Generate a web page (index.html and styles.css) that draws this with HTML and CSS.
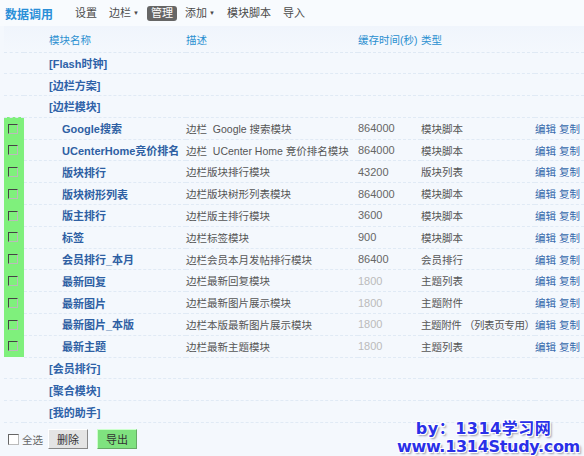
FILE: index.html
```html
<!DOCTYPE html>
<html>
<head>
<meta charset="utf-8">
<link rel="stylesheet" href="styles.css">
</head>
<body>
<div class="page">
  <div class="topbar">
    <span class="title">数据调用</span>
    <nav class="nav">
      <a class="nav-item">设置</a>
      <a class="nav-item">边栏<span class="arrow">▼</span></a>
      <a class="nav-item active">管理</a>
      <a class="nav-item">添加<span class="arrow">▼</span></a>
      <a class="nav-item">模块脚本</a>
      <a class="nav-item">导入</a>
    </nav>
  </div>
  <table class="grid">
    <colgroup>
      <col class="c-check"><col class="c-name"><col class="c-desc"><col class="c-cache"><col class="c-type"><col class="c-ops">
    </colgroup>
    <thead>
      <tr class="head">
        <th></th><th class="pad-g">模块名称</th><th>描述</th><th>缓存时间(秒)</th><th>类型</th><th></th>
      </tr>
    </thead>
    <tbody>
      <tr class="group"><td></td><td class="pad-g" colspan="5">[Flash时钟]</td></tr>
      <tr class="group"><td></td><td class="pad-g" colspan="5">[边栏方案]</td></tr>
      <tr class="group"><td></td><td class="pad-g" colspan="5">[边栏模块]</td></tr>
      <tr class="item"><td class="chk"><span class="box"></span></td><td class="name">Google搜索</td><td class="desc">边栏&nbsp; Google 搜索模块</td><td class="cache">864000</td><td class="type">模块脚本</td><td class="ops"><a>编辑</a> <a>复制</a></td></tr>
      <tr class="item"><td class="chk"><span class="box"></span></td><td class="name">UCenterHome竞价排名</td><td class="desc">边栏&nbsp; UCenter Home 竞价排名模块</td><td class="cache">864000</td><td class="type">模块脚本</td><td class="ops"><a>编辑</a> <a>复制</a></td></tr>
      <tr class="item"><td class="chk"><span class="box"></span></td><td class="name">版块排行</td><td class="desc">边栏版块排行模块</td><td class="cache">43200</td><td class="type">版块列表</td><td class="ops"><a>编辑</a> <a>复制</a></td></tr>
      <tr class="item"><td class="chk"><span class="box"></span></td><td class="name">版块树形列表</td><td class="desc">边栏版块树形列表模块</td><td class="cache">864000</td><td class="type">模块脚本</td><td class="ops"><a>编辑</a> <a>复制</a></td></tr>
      <tr class="item"><td class="chk"><span class="box"></span></td><td class="name">版主排行</td><td class="desc">边栏版主排行模块</td><td class="cache">3600</td><td class="type">模块脚本</td><td class="ops"><a>编辑</a> <a>复制</a></td></tr>
      <tr class="item"><td class="chk"><span class="box"></span></td><td class="name">标签</td><td class="desc">边栏标签模块</td><td class="cache">900</td><td class="type">模块脚本</td><td class="ops"><a>编辑</a> <a>复制</a></td></tr>
      <tr class="item"><td class="chk"><span class="box"></span></td><td class="name">会员排行_本月</td><td class="desc">边栏会员本月发帖排行模块</td><td class="cache">86400</td><td class="type">会员排行</td><td class="ops"><a>编辑</a> <a>复制</a></td></tr>
      <tr class="item"><td class="chk"><span class="box"></span></td><td class="name">最新回复</td><td class="desc">边栏最新回复模块</td><td class="cache dim">1800</td><td class="type">主题列表</td><td class="ops"><a>编辑</a> <a>复制</a></td></tr>
      <tr class="item"><td class="chk"><span class="box"></span></td><td class="name">最新图片</td><td class="desc">边栏最新图片展示模块</td><td class="cache dim">1800</td><td class="type">主题附件</td><td class="ops"><a>编辑</a> <a>复制</a></td></tr>
      <tr class="item"><td class="chk"><span class="box"></span></td><td class="name">最新图片_本版</td><td class="desc">边栏本版最新图片展示模块</td><td class="cache dim">1800</td><td class="type tight">主题附件 （列表页专用）</td><td class="ops"><a>编辑</a> <a>复制</a></td></tr>
      <tr class="item"><td class="chk"><span class="box"></span></td><td class="name">最新主题</td><td class="desc">边栏最新主题模块</td><td class="cache dim">1800</td><td class="type">主题列表</td><td class="ops"><a>编辑</a> <a>复制</a></td></tr>
      <tr class="group"><td></td><td class="pad-g" colspan="5">[会员排行]</td></tr>
      <tr class="group"><td></td><td class="pad-g" colspan="5">[聚合模块]</td></tr>
      <tr class="group"><td></td><td class="pad-g" colspan="5">[我的助手]</td></tr>
    </tbody>
  </table>
  <div class="footer">
    <label class="all"><span class="box"></span>全选</label>
    <button class="btn">删除</button>
    <button class="btn green">导出</button>
  </div>
  <div class="watermark">
    <div class="wm1">by：1314学习网</div>
    <div class="wm2">www.1314Study.com</div>
  </div>
</div>
</body>
</html>
```
FILE: styles.css
```css
html, body {
  margin: 0;
  padding: 0;
}
body {
  background: #f4f8fd;
  font-family: "Liberation Sans", "Noto Sans CJK SC", sans-serif;
  font-size: 10.5px;
  color: #555;
}
.page {
  position: relative;
  width: 584px;
  height: 456px;
  overflow: hidden;
}
.topbar {
  height: 26px;
  display: flex;
  align-items: center;
  padding-left: 5px;
  background: #f8fbfe;
}
.title {
  font-size: 12px;
  font-weight: bold;
  color: #2a8fd8;
  width: 66px;
}
.nav {
  display: flex;
  align-items: center;
  gap: 4px;
}
.nav-item {
  color: #4a4a4a;
  font-size: 11px;
  line-height: 15px;
  padding: 0 4px;
  border-radius: 3px;
}
.nav-item .arrow {
  font-size: 6px;
  margin-left: 2px;
  vertical-align: 2px;
}
.nav-item.active {
  background: #666;
  color: #fff;
}
.grid {
  margin-left: 4px;
  width: 580px;
  border-collapse: collapse;
  table-layout: fixed;
}
.c-check { width: 20px; }
.c-name { width: 162px; }
.c-desc { width: 172px; }
.c-cache { width: 63px; }
.c-type { width: 114px; }
.c-ops { width: 49px; }
.grid th, .grid td {
  padding: 0;
  text-align: left;
  white-space: nowrap;
  overflow: visible;
}
.head {
  height: 26px;
  background: linear-gradient(#f0f5fc, #f4f8fd);
}
.head th {
  font-weight: normal;
  color: #2a8fd0;
  border-bottom: 1px dashed #dfe9f4;
  vertical-align: middle;
  padding-top: 2px;
}
.grid tbody tr {
  height: 21.8px;
}
.grid tbody td {
  border-bottom: 1px dashed #e0eaf5;
  vertical-align: middle;
}
.grid .pad-g {
  padding-left: 25px;
}
.group td {
  color: #2e62a8;
  font-weight: bold;
  font-size: 11px;
}
.grid .chk {
  background: #7ff07c;
  padding-left: 4px;
  border-bottom: none;
}
.box {
  display: inline-block;
  width: 8px;
  height: 8px;
  border-top: 1px solid #444;
  border-left: 1px solid #444;
  border-right: 1px solid #bbb;
  border-bottom: 1px solid #bbb;
  background: #fbfbfb;
  vertical-align: middle;
}
.chk .box {
  background: transparent;
  margin-top: -2px;
}
.grid .name {
  padding-left: 38px;
  color: #2e5fa3;
  font-weight: bold;
  font-size: 11px;
}
.desc { color: #555; }
.cache { color: #666; font-size: 11px; }
.cache.dim { color: #bbb; }
.type { color: #555; }
.type.tight { letter-spacing: -0.4px; }
.ops a {
  color: #3468ab;
}
.footer {
  display: flex;
  align-items: center;
  height: 22px;
  padding-left: 8px;
  margin-top: 5px;
}
.all {
  display: flex;
  align-items: center;
  gap: 3px;
  color: #666;
  width: 40px;
}
.all .box {
  width: 9px;
  height: 9px;
  border-top-color: #666;
  border-left-color: #666;
  background: #fff;
}
.btn {
  font-family: "Liberation Sans", "Noto Sans CJK SC", sans-serif;
  font-size: 11px;
  width: 40px;
  height: 20px;
  padding: 0;
  border: 1px solid;
  border-color: #fff #888 #888 #fff;
  background: #e4e4e4;
  color: #333;
  margin-right: 9px;
}
.btn.green {
  background: #7fe27f;
  border-color: #cfc #6a6 #6a6 #cfc;
}
.watermark {
  position: absolute;
  right: 4px;
  bottom: 0px;
  text-align: center;
  font-family: "DejaVu Sans", "Noto Sans CJK SC", sans-serif;
  font-weight: bold;
  color: #2a30e8;
  font-size: 16px;
  line-height: 18px;
  text-shadow: 1px 1px 0 #fff, -1px -1px 0 #fff, 1px -1px 0 #fff, -1px 1px 0 #fff, 2px 2px 2px #99a;
}
.wm1 {
  letter-spacing: 0.5px;
  padding-right: 10px;
}
.wm2 {
  font-size: 16px;
  letter-spacing: -0.3px;
}
```
